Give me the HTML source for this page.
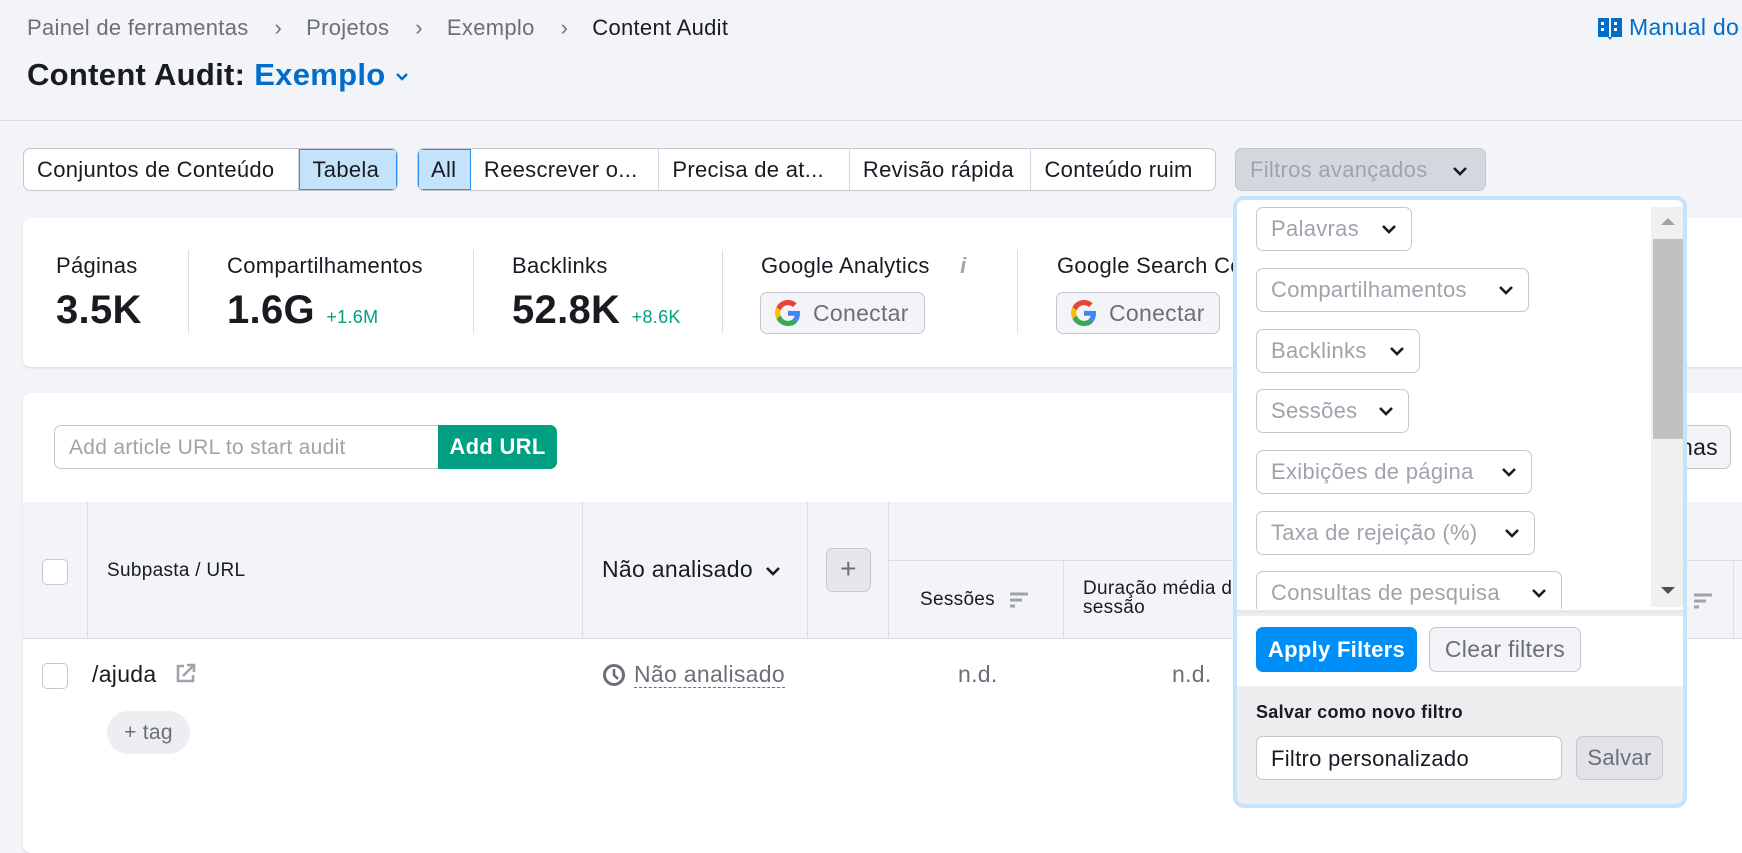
<!DOCTYPE html>
<html><head><meta charset="utf-8"><style>
*{box-sizing:border-box;margin:0;padding:0}
body{width:1742px;height:828px;overflow:hidden;background:#f3f4f8;font-family:"Liberation Sans",Arial,sans-serif;color:#191b23;position:relative;letter-spacing:0.3px}
.a{position:absolute;white-space:nowrap}
.seg{position:absolute;top:148px;height:43px;display:flex;border:1px solid #c4c7cf;border-radius:7px;background:#fff;overflow:hidden}
.seg div{height:100%;display:flex;align-items:center;padding-left:13px;font-size:22px;border-right:1px solid #d5d7de;color:#191b23;white-space:nowrap}
.seg div:last-child{border-right:none}
.seg .sel{background:#c4e2fa;outline:1px solid #2b8ef0;outline-offset:-1px}
.lab{font-size:22px;color:#191b23}
.val{font-size:40px;font-weight:bold;color:#191b23}
.gr{font-size:18px;color:#009f81;font-weight:normal}
.vd{position:absolute;top:250px;width:1px;height:83px;background:#dcdde3}
.btn{position:absolute;border:1px solid #c4c7cf;border-radius:7px;background:#f3f4f8;display:flex;align-items:center;font-size:23px;color:#6c6e79}
.cb{position:absolute;width:26px;height:26px;border:1px solid #c4c7cf;border-radius:5px;background:#fff}
.pill{position:absolute;left:1256px;height:44px;border:1px solid #c4c7cf;border-radius:7px;background:#fff;font-size:22px;color:#a0a3ac;display:flex;align-items:center;padding-left:14px;white-space:nowrap}
.pill svg{position:absolute;right:14px;top:16px}
.sp{margin:0 24px 0 26px}
</style></head><body>
<!-- breadcrumb -->
<div class="a" style="left:27px;top:15px;font-size:22px;color:#6c6e79">Painel de ferramentas<span class="sp">›</span>Projetos<span class="sp">›</span>Exemplo<span class="sp">›</span><span style="color:#191b23">Content Audit</span></div>
<div class="a" style="left:27px;top:57px;font-size:31px;font-weight:bold">Content Audit: <span style="color:#006dca">Exemplo</span> <svg width="16" height="12" viewBox="0 0 16 12" style="vertical-align:middle"><path d="M3 3l5 5 5-5" stroke="#006dca" stroke-width="2.4" fill="none"/></svg></div>
<div class="a" style="left:1597px;top:14px;font-size:23px;color:#006dca;display:flex;align-items:center"><svg width="26" height="26" viewBox="0 0 26 26" style="margin-right:6px"><path d="M1 3h11v19H1z M14 3h11v19H14z" fill="#006dca"/><rect x="4" y="7" width="3" height="3" fill="#fff"/><rect x="4" y="13" width="3" height="3" fill="#fff"/><rect x="17" y="7" width="3" height="3" fill="#fff"/><rect x="17" y="13" width="3" height="3" fill="#fff"/><path d="M11 22l2 3 2-3z" fill="#006dca"/></svg>Manual do</div>
<div class="a" style="left:0;top:120px;width:1742px;height:1px;background:#dcdde3"></div>
<!-- segments -->
<div class="seg" style="left:23px;width:375px"><div style="width:277px">Conjuntos de Conteúdo</div><div class="sel" style="width:98px">Tabela</div></div>
<div class="seg" style="left:417px;width:799px"><div class="sel" style="width:53px">All</div><div style="width:189px">Reescrever o...</div><div style="width:191px">Precisa de at...</div><div style="width:182px">Revisão rápida</div><div style="width:184px">Conteúdo ruim</div></div>
<div class="a" style="left:1235px;top:148px;width:251px;height:43px;background:#d5d7de;border:1px solid #c4c7cf;border-radius:7px;font-size:22px;color:#a0a3ac;display:flex;align-items:center;padding-left:14px">Filtros avançados<svg width="18" height="12" viewBox="0 0 18 12" style="position:absolute;right:16px;top:16px"><path d="M3 3l6 6 6-6" stroke="#191b23" stroke-width="2.6" fill="none"/></svg></div>
<!-- stats card -->
<div class="a" style="left:23px;top:218px;width:1760px;height:149px;background:#fff;border-radius:8px;box-shadow:0 1px 2px rgba(0,0,0,.12)"></div>
<div class="a lab" style="left:56px;top:253px">Páginas</div><div class="a val" style="left:56px;top:288px">3.5K</div>
<div class="vd" style="left:188px"></div>
<div class="a lab" style="left:227px;top:253px">Compartilhamentos</div><div class="a val" style="left:227px;top:288px">1.6G <span class="gr">+1.6M</span></div>
<div class="vd" style="left:473px"></div>
<div class="a lab" style="left:512px;top:253px">Backlinks</div><div class="a val" style="left:512px;top:288px">52.8K <span class="gr">+8.6K</span></div>
<div class="vd" style="left:722px"></div>
<div class="a lab" style="left:761px;top:253px">Google Analytics <span style="color:#a0a3ac;font-style:italic;font-weight:bold;margin-left:24px">i</span></div>
<div class="btn" style="left:760px;top:292px;width:165px;height:42px;padding-left:14px"><svg width="26" height="26" viewBox="0 0 48 48" style="margin-right:12px"><path fill="#EA4335" d="M24 9.5c3.5 0 6.6 1.2 9.1 3.6l6.8-6.8C35.8 2.4 30.3 0 24 0 14.6 0 6.6 5.4 2.7 13.3l7.9 6.1C12.5 13.6 17.8 9.5 24 9.5z"/><path fill="#4285F4" d="M46.1 24.5c0-1.6-.1-3.1-.4-4.5H24v9h12.4c-.5 2.9-2.2 5.4-4.7 7l7.6 5.9c4.4-4.1 6.8-10.1 6.8-17.4z"/><path fill="#FBBC05" d="M10.5 28.6c-.5-1.4-.8-3-.8-4.6s.3-3.2.8-4.6l-7.9-6.1C1 16.6 0 20.2 0 24s1 7.4 2.7 10.7l7.8-6.1z"/><path fill="#34A853" d="M24 48c6.5 0 11.9-2.1 15.9-5.8l-7.6-5.9c-2.1 1.4-4.9 2.3-8.3 2.3-6.2 0-11.5-4.2-13.4-9.9l-7.9 6.1C6.6 42.6 14.6 48 24 48z"/></svg>Conectar</div>
<div class="vd" style="left:1017px"></div>
<div class="a lab" style="left:1057px;top:253px">Google Search Console</div>
<div class="btn" style="left:1056px;top:292px;width:164px;height:42px;padding-left:14px"><svg width="26" height="26" viewBox="0 0 48 48" style="margin-right:12px"><path fill="#EA4335" d="M24 9.5c3.5 0 6.6 1.2 9.1 3.6l6.8-6.8C35.8 2.4 30.3 0 24 0 14.6 0 6.6 5.4 2.7 13.3l7.9 6.1C12.5 13.6 17.8 9.5 24 9.5z"/><path fill="#4285F4" d="M46.1 24.5c0-1.6-.1-3.1-.4-4.5H24v9h12.4c-.5 2.9-2.2 5.4-4.7 7l7.6 5.9c4.4-4.1 6.8-10.1 6.8-17.4z"/><path fill="#FBBC05" d="M10.5 28.6c-.5-1.4-.8-3-.8-4.6s.3-3.2.8-4.6l-7.9-6.1C1 16.6 0 20.2 0 24s1 7.4 2.7 10.7l7.8-6.1z"/><path fill="#34A853" d="M24 48c6.5 0 11.9-2.1 15.9-5.8l-7.6-5.9c-2.1 1.4-4.9 2.3-8.3 2.3-6.2 0-11.5-4.2-13.4-9.9l-7.9 6.1C6.6 42.6 14.6 48 24 48z"/></svg>Conectar</div>
<!-- table card -->
<div class="a" style="left:23px;top:393px;width:1760px;height:460px;background:#fff;border-radius:8px;box-shadow:0 1px 2px rgba(0,0,0,.12)"></div>
<div class="a" style="left:54px;top:425px;width:390px;height:44px;border:1px solid #c4c7cf;border-radius:7px 0 0 7px;background:#fff;font-size:21px;color:#a0a3ac;padding:10px 0 0 14px">Add article URL to start audit</div>
<div class="a" style="left:438px;top:425px;width:119px;height:44px;background:#009f81;border-radius:0 7px 7px 0;color:#fff;font-size:22px;font-weight:bold;display:flex;align-items:center;justify-content:center">Add URL</div>
<div class="btn" style="left:1640px;top:425px;width:91px;height:44px;justify-content:flex-end;padding-right:12px;color:#191b23;overflow:hidden">colunas</div>
<div class="a" style="left:23px;top:502px;width:1719px;height:137px;background:#f3f4f8;border-bottom:1px solid #dcdde3"></div>
<div class="a" style="left:87px;top:502px;width:1px;height:137px;background:#dcdde3"></div>
<div class="a" style="left:582px;top:502px;width:1px;height:137px;background:#dcdde3"></div>
<div class="a" style="left:807px;top:502px;width:1px;height:137px;background:#dcdde3"></div>
<div class="a" style="left:888px;top:502px;width:1px;height:137px;background:#dcdde3"></div>
<div class="a" style="left:888px;top:560px;width:854px;height:1px;background:#dcdde3"></div>
<div class="a" style="left:1063px;top:560px;width:1px;height:79px;background:#dcdde3"></div>
<div class="a" style="left:1733px;top:560px;width:1px;height:79px;background:#dcdde3"></div>
<div class="cb" style="left:42px;top:559px"></div>
<div class="a" style="left:107px;top:560px;font-size:19px">Subpasta / URL</div>
<div class="a" style="left:602px;top:556px;font-size:23px">Não analisado <svg width="18" height="12" viewBox="0 0 18 12" style="margin-left:4px"><path d="M3 3l6 6 6-6" stroke="#191b23" stroke-width="2.6" fill="none"/></svg></div>
<div class="a" style="left:826px;top:548px;width:45px;height:44px;border:1px solid #c4c7cf;border-radius:7px;background:#e6e7ec;font-size:28px;color:#6c6e79;text-align:center;line-height:40px">+</div>
<div class="a" style="left:920px;top:589px;font-size:19px">Sessões <svg width="22" height="18" viewBox="0 0 22 18" style="margin-left:8px;vertical-align:middle"><path d="M1 3h18M1 9h12M1 15h5" stroke="#a0a3ac" stroke-width="3"/></svg></div>
<div class="a" style="left:1083px;top:579px;font-size:19px;line-height:19px">Duração média da<br>sessão</div>
<div class="a" style="left:1693px;top:592px"><svg width="22" height="18" viewBox="0 0 22 18"><path d="M1 3h18M1 9h12M1 15h5" stroke="#a0a3ac" stroke-width="3"/></svg></div>
<div class="cb" style="left:42px;top:663px"></div>
<div class="a" style="left:92px;top:661px;font-size:23px">/ajuda <svg width="22" height="22" viewBox="0 0 22 22" style="margin-left:12px;vertical-align:-2px"><path d="M9 4H3v15h15v-6" stroke="#a0a3ac" stroke-width="2.6" fill="none"/><path d="M8 14L19 3M12 3h7v7" stroke="#a0a3ac" stroke-width="2.6" fill="none"/></svg></div>
<div class="a" style="left:107px;top:711px;width:83px;height:43px;background:#eceef2;border-radius:22px;font-size:21px;color:#6c6e79;text-align:center;line-height:43px">+ tag</div>
<div class="a" style="left:602px;top:661px;font-size:23px;color:#6c6e79;display:flex;align-items:center"><svg width="24" height="24" viewBox="0 0 24 24" style="margin-right:8px"><circle cx="12" cy="12" r="9.5" stroke="#6c6e79" stroke-width="3" fill="none"/><path d="M12 6v6l4 4" stroke="#6c6e79" stroke-width="2.6" fill="none"/></svg><span style="border-bottom:1px dashed #6c6e79;line-height:26px">Não analisado</span></div>
<div class="a" style="left:958px;top:661px;font-size:23px;color:#6c6e79">n.d.</div>
<div class="a" style="left:1172px;top:661px;font-size:23px;color:#6c6e79">n.d.</div>
<!-- popup -->
<div class="a" style="left:1233px;top:196px;width:454px;height:612px;border:4px solid #c6e3fb;border-radius:11px;background:#ededef;overflow:hidden">
 <div style="position:absolute;left:0;top:0;width:446px;height:413px;background:#fff;border-bottom:3px solid #e6e7ec"></div>
 <div style="position:absolute;left:0;top:416px;width:446px;height:70px;background:#fff"></div>
 <div style="position:absolute;left:414px;top:7px;width:34px;height:400px;background:#f0f0f0"></div>
 <div style="position:absolute;left:416px;top:39px;width:30px;height:200px;background:#c1c1c1"></div>
 <div style="position:absolute;left:424px;top:18px;width:0;height:0;border-left:7px solid transparent;border-right:7px solid transparent;border-bottom:7px solid #a3a3a3"></div>
 <div style="position:absolute;left:424px;top:387px;width:0;height:0;border-left:7px solid transparent;border-right:7px solid transparent;border-top:7px solid #505050"></div>
</div>
<div style="position:absolute;left:1237px;top:200px;width:408px;height:409px;overflow:hidden">
 <div class="pill" style="left:19px;top:7px;width:156px">Palavras<svg width="16" height="11" viewBox="0 0 16 11"><path d="M2 2l6 6 6-6" stroke="#191b23" stroke-width="2.6" fill="none"/></svg></div>
 <div class="pill" style="left:19px;top:68px;width:273px">Compartilhamentos<svg width="16" height="11" viewBox="0 0 16 11"><path d="M2 2l6 6 6-6" stroke="#191b23" stroke-width="2.6" fill="none"/></svg></div>
 <div class="pill" style="left:19px;top:129px;width:164px">Backlinks<svg width="16" height="11" viewBox="0 0 16 11"><path d="M2 2l6 6 6-6" stroke="#191b23" stroke-width="2.6" fill="none"/></svg></div>
 <div class="pill" style="left:19px;top:189px;width:153px">Sessões<svg width="16" height="11" viewBox="0 0 16 11"><path d="M2 2l6 6 6-6" stroke="#191b23" stroke-width="2.6" fill="none"/></svg></div>
 <div class="pill" style="left:19px;top:250px;width:276px">Exibições de página<svg width="16" height="11" viewBox="0 0 16 11"><path d="M2 2l6 6 6-6" stroke="#191b23" stroke-width="2.6" fill="none"/></svg></div>
 <div class="pill" style="left:19px;top:311px;width:279px">Taxa de rejeição (%)<svg width="16" height="11" viewBox="0 0 16 11"><path d="M2 2l6 6 6-6" stroke="#191b23" stroke-width="2.6" fill="none"/></svg></div>
 <div class="pill" style="left:19px;top:371px;width:306px">Consultas de pesquisa<svg width="16" height="11" viewBox="0 0 16 11"><path d="M2 2l6 6 6-6" stroke="#191b23" stroke-width="2.6" fill="none"/></svg></div>
</div>
<div class="a" style="left:1256px;top:627px;width:161px;height:45px;background:#008ff8;border-radius:7px;color:#fff;font-size:22px;font-weight:bold;display:flex;align-items:center;justify-content:center">Apply Filters</div>
<div class="a" style="left:1429px;top:627px;width:152px;height:45px;background:#f3f4f8;border:1px solid #c4c7cf;border-radius:7px;color:#6c6e79;font-size:23px;display:flex;align-items:center;justify-content:center">Clear filters</div>
<div class="a" style="left:1256px;top:702px;font-size:18px;font-weight:bold">Salvar como novo filtro</div>
<div class="a" style="left:1256px;top:736px;width:306px;height:44px;background:#fff;border:1px solid #c4c7cf;border-radius:7px;font-size:22px;padding:9px 0 0 14px">Filtro personalizado</div>
<div class="a" style="left:1576px;top:736px;width:87px;height:44px;background:#e2e3e8;border:1px solid #c4c7cf;border-radius:7px;font-size:22px;color:#6c6e79;display:flex;align-items:center;justify-content:center">Salvar</div>
</body></html>
